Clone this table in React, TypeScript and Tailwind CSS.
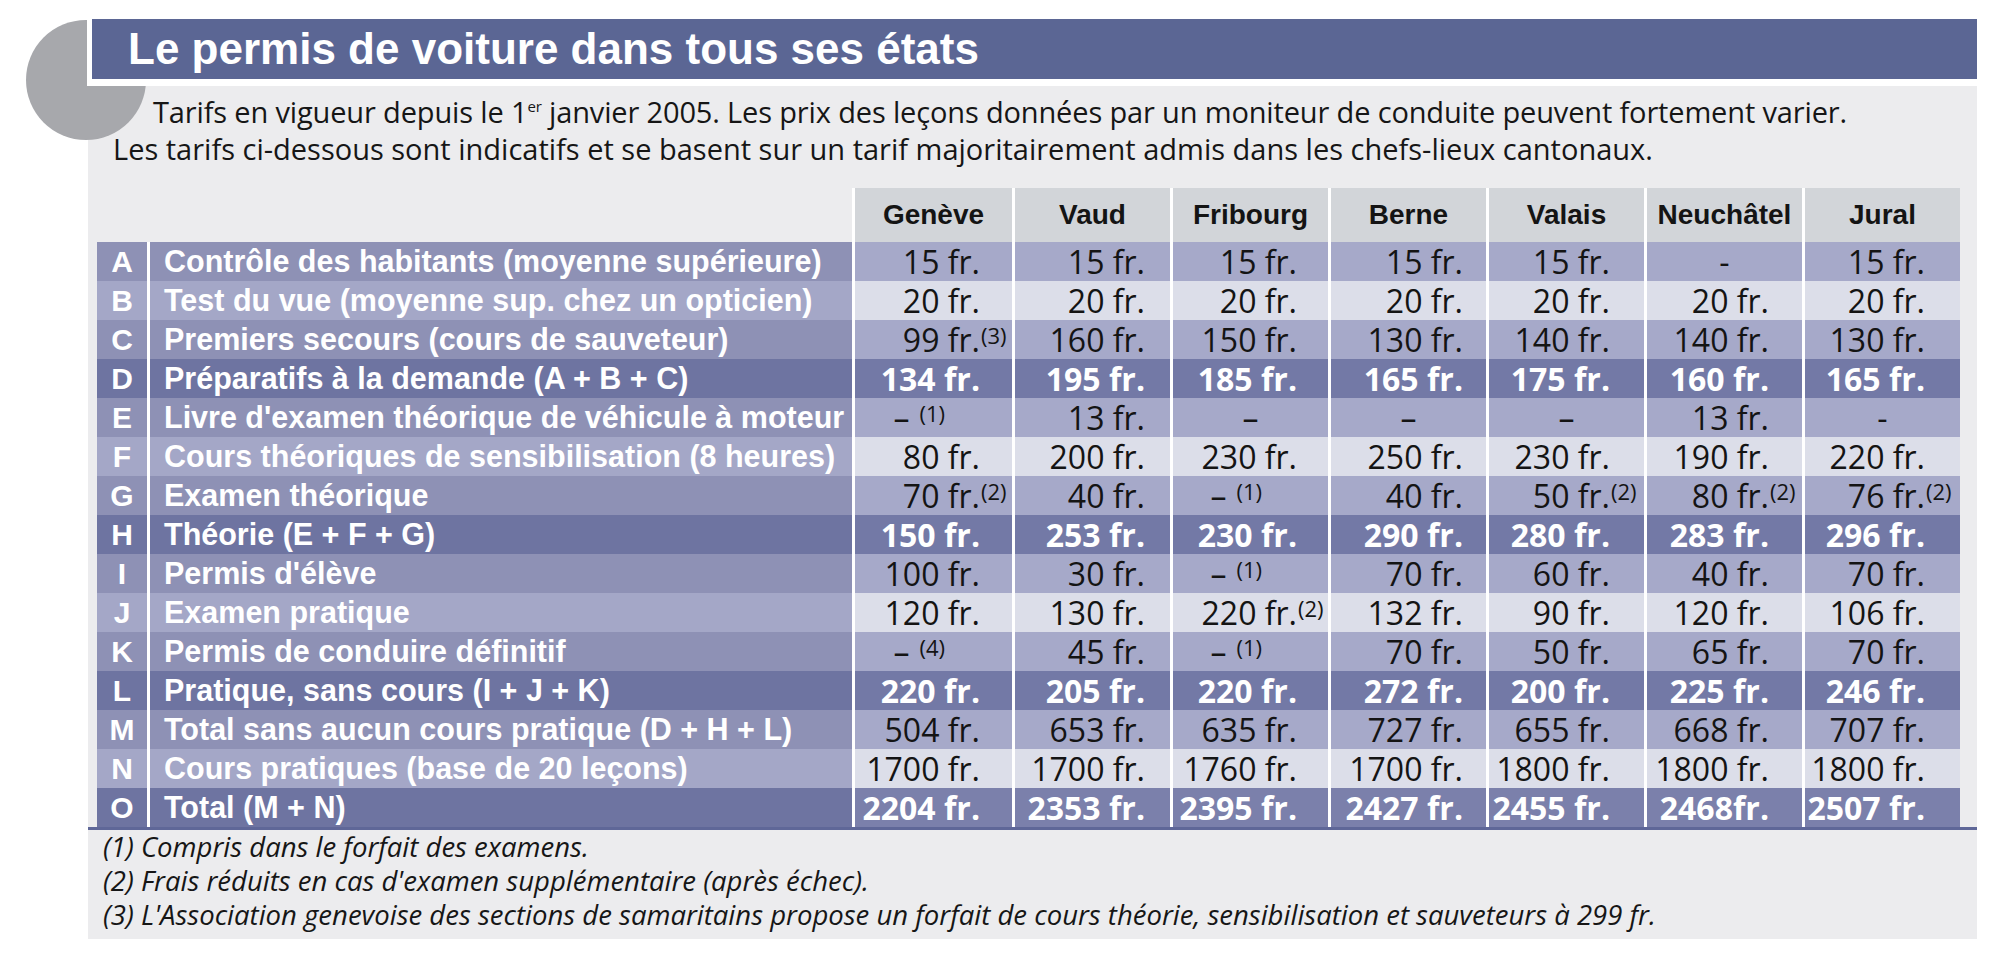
import React from "react";

type Tone = "mid" | "light" | "dark";

type Row = {
  letter: string;
  label: string;
  tone: Tone;
  values: string[];
};

const cantons = ["Genève", "Vaud", "Fribourg", "Berne", "Valais", "Neuchâtel", "Jural"];

// right padding of the figures in each canton column
const pads = ["pr-[32px]", "pr-[25px]", "pr-[31px]", "pr-[23px]", "pr-[34px]", "pr-[33px]", "pr-[35px]"];
const dashPads = ["pr-[67px]", "pr-[60px]", "pr-[66px]", "pr-[58px]", "pr-[69px]", "pr-[68px]", "pr-[70px]"];

// "text|note" puts a footnote call after the value
const rows: Row[] = [
  { letter: "A", label: "Contrôle des habitants (moyenne supérieure)", tone: "mid", values: ["15 fr.", "15 fr.", "15 fr.", "15 fr.", "15 fr.", "-", "15 fr."] },
  { letter: "B", label: "Test du vue (moyenne sup. chez un opticien)", tone: "light", values: ["20 fr.", "20 fr.", "20 fr.", "20 fr.", "20 fr.", "20 fr.", "20 fr."] },
  { letter: "C", label: "Premiers secours (cours de sauveteur)", tone: "mid", values: ["99 fr.|3", "160 fr.", "150 fr.", "130 fr.", "140 fr.", "140 fr.", "130 fr."] },
  { letter: "D", label: "Préparatifs à la demande (A + B + C)", tone: "dark", values: ["134 fr.", "195 fr.", "185 fr.", "165 fr.", "175 fr.", "160 fr.", "165 fr."] },
  { letter: "E", label: "Livre d'examen théorique de véhicule à moteur", tone: "mid", values: ["–|1", "13 fr.", "–", "–", "–", "13 fr.", "-"] },
  { letter: "F", label: "Cours théoriques de sensibilisation (8 heures)", tone: "light", values: ["80 fr.", "200 fr.", "230 fr.", "250 fr.", "230 fr.", "190 fr.", "220 fr."] },
  { letter: "G", label: "Examen théorique", tone: "mid", values: ["70 fr.|2", "40 fr.", "–|1", "40 fr.", "50 fr.|2", "80 fr.|2", "76 fr.|2"] },
  { letter: "H", label: "Théorie (E + F + G)", tone: "dark", values: ["150 fr.", "253 fr.", "230 fr.", "290 fr.", "280 fr.", "283 fr.", "296 fr."] },
  { letter: "I", label: "Permis d'élève", tone: "mid", values: ["100 fr.", "30 fr.", "–|1", "70 fr.", "60 fr.", "40 fr.", "70 fr."] },
  { letter: "J", label: "Examen pratique", tone: "light", values: ["120 fr.", "130 fr.", "220 fr.|2", "132 fr.", "90 fr.", "120 fr.", "106 fr."] },
  { letter: "K", label: "Permis de conduire définitif", tone: "mid", values: ["–|4", "45 fr.", "–|1", "70 fr.", "50 fr.", "65 fr.", "70 fr."] },
  { letter: "L", label: "Pratique, sans cours (I + J + K)", tone: "dark", values: ["220 fr.", "205 fr.", "220 fr.", "272 fr.", "200 fr.", "225 fr.", "246 fr."] },
  { letter: "M", label: "Total sans aucun cours pratique (D + H + L)", tone: "mid", values: ["504 fr.", "653 fr.", "635 fr.", "727 fr.", "655 fr.", "668 fr.", "707 fr."] },
  { letter: "N", label: "Cours pratiques (base de 20 leçons)", tone: "light", values: ["1700 fr.", "1700 fr.", "1760 fr.", "1700 fr.", "1800 fr.", "1800 fr.", "1800 fr."] },
  { letter: "O", label: "Total (M + N)", tone: "dark", values: ["2204 fr.", "2353 fr.", "2395 fr.", "2427 fr.", "2455 fr.", "2468fr.", "2507 fr."] },
];

const labelBg: Record<Tone, string> = {
  mid: "bg-[#8e91b5]",
  light: "bg-[#a4a7c7]",
  dark: "bg-[#6e74a1]",
};

const valueBg: Record<Tone, string> = {
  mid: "bg-[#a6a9c9]",
  light: "bg-[#dcdee9]",
  dark: "bg-[#7379a6]",
};

const label = "font-['Liberation_Sans',Arial,sans-serif] font-bold";
const figure = "font-['Open_Sans','Noto_Sans',sans-serif]";

const ValueCell = ({ raw, col, tone, last }: { raw: string; col: number; tone: Tone; last: boolean }) => {
  const [text, note] = raw.split("|");
  const bold = tone === "dark";
  const bg = last ? "bg-[#7b80ab]" : valueBg[tone];
  const base = `flex h-[39px] items-center border-l-[3px] border-white ${bg} ${figure} text-[32px] leading-[39px] ${
    bold ? "font-bold text-white" : "text-[#141414]"
  }`;

  if (text === "–" || text === "-") {
    if (!note) {
      return <div className={`${base} justify-center`}>{text}</div>;
    }
    return (
      <div className={`${base} justify-end ${dashPads[col]}`}>
        <span>{text}</span>
        <span className="ml-[10px] self-start pt-[3px] text-[22px] leading-[24px]">({note})</span>
      </div>
    );
  }

  return (
    <div className={`${base} justify-end ${pads[col]}`}>
      <span className="relative">
        {text}
        {note && (
          <span className="absolute left-full top-[3px] ml-[1px] text-[22px] leading-[24px]">({note})</span>
        )}
      </span>
    </div>
  );
};

export default function App() {
  return (
    <div className="relative h-[954px] w-[2000px] overflow-hidden bg-white">
      <div className="absolute left-[26px] top-[20px] z-10 h-[120px] w-[120px] rounded-full bg-[#a7a8ac]" />

      <header className="relative z-20 ml-[87px] mt-[19px] w-[1890px] border-b-[7px] border-l-[5px] border-white">
        <div className="flex h-[60px] items-center bg-[#5b6694] pl-[36px]">
          <h1 className={`${label} text-[44px] leading-none text-white`}>Le permis de voiture dans tous ses états</h1>
        </div>
      </header>

      <section className="ml-[88px] flex h-[853px] w-[1889px] flex-col bg-[#ececee]">
        <p className="pl-[25px] pt-[10px] indent-[40px] font-['Open_Sans','Noto_Sans',sans-serif] text-[29px] leading-[32px] text-[#161616]">
          <span className="tracking-[-0.15px]">
            Tarifs en vigueur depuis le 1<span className="relative -top-[11px] text-[15px]">er</span> janvier 2005. Les prix
            des leçons données par un moniteur de conduite peuvent fortement varier.
          </span>
          <br />
          Les tarifs ci-dessous sont indicatifs et se basent sur un tarif majoritairement admis dans les chefs-lieux
          cantonaux.
        </p>

        <div className="mt-[23px] pl-[9px]">
          <div className="grid grid-cols-[50px_705px_160px_repeat(6,158px)]">
            <div />
            <div />
            {cantons.map((c) => (
              <div
                key={c}
                className={`flex h-[54px] items-center justify-center border-l-[3px] border-white bg-[#d2d5d9] ${label} text-[28px] text-[#141414]`}
              >
                {c}
              </div>
            ))}

            {rows.map((r, i) => (
              <React.Fragment key={r.letter}>
                <div
                  className={`flex h-[39px] items-center justify-center ${labelBg[r.tone]} ${label} text-[30px] text-white`}
                >
                  {r.letter}
                </div>
                <div
                  className={`flex h-[39px] items-center border-l-[3px] border-white pl-[14px] ${labelBg[r.tone]} ${label} whitespace-nowrap text-[30.5px] text-white`}
                >
                  {r.label}
                </div>
                {r.values.map((v, j) => (
                  <ValueCell key={j} raw={v} col={j} tone={r.tone} last={i === rows.length - 1} />
                ))}
              </React.Fragment>
            ))}
          </div>
        </div>

        <div className="h-[3px] bg-[#5f6798]" />

        <div className="pl-[15px] font-['Open_Sans','Noto_Sans',sans-serif] text-[27.5px] italic leading-[34px] text-[#161616]">
          <p>(1) Compris dans le forfait des examens.</p>
          <p>(2) Frais réduits en cas d'examen supplémentaire (après échec).</p>
          <p>
            (3) L'Association genevoise des sections de samaritains propose un forfait de cours théorie, sensibilisation et
            sauveteurs à 299 fr.
          </p>
        </div>
      </section>
    </div>
  );
}
